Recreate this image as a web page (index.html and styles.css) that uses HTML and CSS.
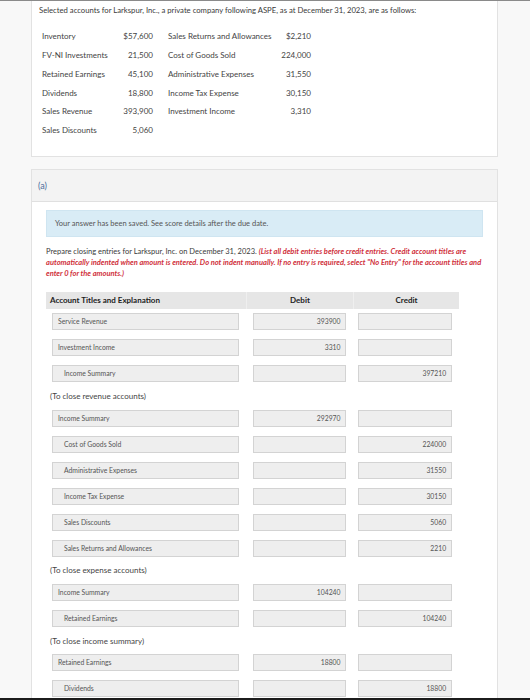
FILE: index.html
```html
<!DOCTYPE html>
<html>
<head>
<meta charset="utf-8">
<link rel="stylesheet" href="styles.css">
</head>
<body>
<div class="page">
  <div class="card card-top">
    <p class="intro">Selected accounts for Larkspur, Inc., a private company following ASPE, as at December 31, 2023, are as follows:</p>
    <div class="accounts">
      <span class="lab">Inventory</span><span class="amt">$57,600</span><span class="lab lab2">Sales Returns and Allowances</span><span class="amt">$2,210</span>
      <span class="lab">FV-NI Investments</span><span class="amt">21,500</span><span class="lab lab2">Cost of Goods Sold</span><span class="amt">224,000</span>
      <span class="lab">Retained Earnings</span><span class="amt">45,100</span><span class="lab lab2">Administrative Expenses</span><span class="amt">31,550</span>
      <span class="lab">Dividends</span><span class="amt">18,800</span><span class="lab lab2">Income Tax Expense</span><span class="amt">30,150</span>
      <span class="lab">Sales Revenue</span><span class="amt">393,900</span><span class="lab lab2">Investment Income</span><span class="amt">3,310</span>
      <span class="lab">Sales Discounts</span><span class="amt">5,060</span><span class="lab lab2"></span><span class="amt"></span>
    </div>
  </div>

  <div class="card card-part">
    <div class="part-head">(a)</div>
    <div class="part-body">
      <div class="alert">Your answer has been saved. See score details after the due date.</div>
      <p class="instr">Prepare closing entries for Larkspur, Inc. on December 31, 2023. <em>(List all debit entries before credit entries. Credit account titles are automatically indented when amount is entered. Do not indent manually. If no entry is required, select "No Entry" for the account titles and enter 0 for the amounts.)</em></p>

      <div class="journal">
        <div class="jhead">
          <div class="hc hc-acct">Account Titles and Explanation</div>
          <div class="hc hc-num">Debit</div>
          <div class="hc hc-num">Credit</div>
        </div>

        <div class="jrow"><div class="c1"><div class="field">Service Revenue</div></div><div class="c2"><div class="field num">393900</div></div><div class="c3"><div class="field num"></div></div></div>
        <div class="jrow"><div class="c1"><div class="field">Investment Income</div></div><div class="c2"><div class="field num">3310</div></div><div class="c3"><div class="field num"></div></div></div>
        <div class="jrow"><div class="c1"><div class="field ind">Income Summary</div></div><div class="c2"><div class="field num"></div></div><div class="c3"><div class="field num">397210</div></div></div>
        <div class="note">(To close revenue accounts)</div>

        <div class="jrow"><div class="c1"><div class="field">Income Summary</div></div><div class="c2"><div class="field num">292970</div></div><div class="c3"><div class="field num"></div></div></div>
        <div class="jrow"><div class="c1"><div class="field ind">Cost of Goods Sold</div></div><div class="c2"><div class="field num"></div></div><div class="c3"><div class="field num">224000</div></div></div>
        <div class="jrow"><div class="c1"><div class="field ind">Administrative Expenses</div></div><div class="c2"><div class="field num"></div></div><div class="c3"><div class="field num">31550</div></div></div>
        <div class="jrow"><div class="c1"><div class="field ind">Income Tax Expense</div></div><div class="c2"><div class="field num"></div></div><div class="c3"><div class="field num">30150</div></div></div>
        <div class="jrow"><div class="c1"><div class="field ind">Sales Discounts</div></div><div class="c2"><div class="field num"></div></div><div class="c3"><div class="field num">5060</div></div></div>
        <div class="jrow"><div class="c1"><div class="field ind">Sales Returns and Allowances</div></div><div class="c2"><div class="field num"></div></div><div class="c3"><div class="field num">2210</div></div></div>
        <div class="note">(To close expense accounts)</div>

        <div class="jrow"><div class="c1"><div class="field">Income Summary</div></div><div class="c2"><div class="field num">104240</div></div><div class="c3"><div class="field num"></div></div></div>
        <div class="jrow"><div class="c1"><div class="field ind">Retained Earnings</div></div><div class="c2"><div class="field num"></div></div><div class="c3"><div class="field num">104240</div></div></div>
        <div class="note">(To close income summary)</div>

        <div class="jrow"><div class="c1"><div class="field">Retained Earnings</div></div><div class="c2"><div class="field num">18800</div></div><div class="c3"><div class="field num"></div></div></div>
        <div class="jrow"><div class="c1"><div class="field ind">Dividends</div></div><div class="c2"><div class="field num"></div></div><div class="c3"><div class="field num">18800</div></div></div>
      </div>
    </div>
  </div>
</div>
<div class="bottom-bar"></div>
</body>
</html>
```

FILE: styles.css
```css
html, body {
  margin: 0;
  padding: 0;
}
body {
  background: #f8f8f8;
  border-top: 1px solid #8a8a8a;
  font-family: Lato, "Open Sans", sans-serif;
  color: #333;
  overflow: hidden;
  height: 699px;
}
.page {
  padding-left: 31px;
  width: 467px;
}
.card {
  background: #fff;
  border: 1px solid #e2e2e2;
  box-sizing: border-box;
  width: 467px;
}
.card-top {
  border-top: none;
  padding: 3px 0 16px 7px;
}
.intro {
  margin: 0;
  font-size: 7.7px;
  line-height: 12px;
  color: #3a3a3a;
  white-space: nowrap;
}
.accounts {
  display: grid;
  grid-template-columns: 67px 44px 125px 33px;
  grid-auto-rows: 18.85px;
  margin-top: 11px;
  padding-left: 3px;
  font-size: 8px;
  line-height: 18.85px;
  color: #444;
  white-space: nowrap;
}
.amt {
  text-align: right;
}
.lab2 {
  padding-left: 15px;
}
.card-part {
  margin-top: 12px;
}
.part-head {
  background: #f3f3f3;
  border-bottom: 1px solid #e0e0e0;
  height: 31px;
  line-height: 31px;
  padding-left: 6px;
  font-size: 9px;
  color: #4a6d9c;
}
.part-body {
  padding: 7.5px 14px 0 14px;
}
.alert {
  background: #d9ecf6;
  border: 1px solid #cfe5f1;
  height: 27px;
  box-sizing: border-box;
  line-height: 25px;
  padding-left: 8px;
  font-size: 7.5px;
  color: #555;
}
.instr {
  margin: 10.6px 0 0 0;
  font-size: 7.5px;
  line-height: 10.7px;
  color: #3a3a3a;
}
.instr em {
  color: #d0313b;
  font-weight: bold;
  font-style: italic;
}
.journal {
  width: 413px;
  margin-top: 13px;
}
.jhead {
  display: grid;
  grid-template-columns: 200px 107px 106px;
  height: 16.5px;
  background: #e6e6e6;
}
.hc {
  font-size: 8px;
  font-weight: bold;
  line-height: 16.5px;
  color: #222;
}
.hc-acct {
  padding-left: 4px;
}
.hc-num {
  text-align: center;
  border-left: 1px solid #efefef;
}
.jrow {
  display: grid;
  grid-template-columns: 200px 107px 106px;
  padding: 4.5px 0;
}
.c1 {
  padding: 0 7px 0 6px;
}
.c2 {
  padding: 0 7px 0 6.5px;
}
.c3 {
  padding: 0 7.4px 0 5.4px;
}
.field {
  height: 17px;
  box-sizing: border-box;
  background: #eeeeee;
  border: 1px solid #d3d3d3;
  font-size: 6.8px;
  line-height: 15px;
  padding-left: 5px;
  color: #555;
  white-space: nowrap;
  overflow: hidden;
}
.field.ind {
  padding-left: 11px;
}
.field.num {
  text-align: right;
  padding-left: 0;
  padding-right: 4.5px;
}
.note {
  height: 18.4px;
  line-height: 18.4px;
  padding-left: 4px;
  font-size: 8px;
  color: #444;
}
.bottom-bar {
  position: fixed;
  left: 0;
  right: 0;
  bottom: 0;
  height: 2px;
  background: #1c1c1c;
}
```
